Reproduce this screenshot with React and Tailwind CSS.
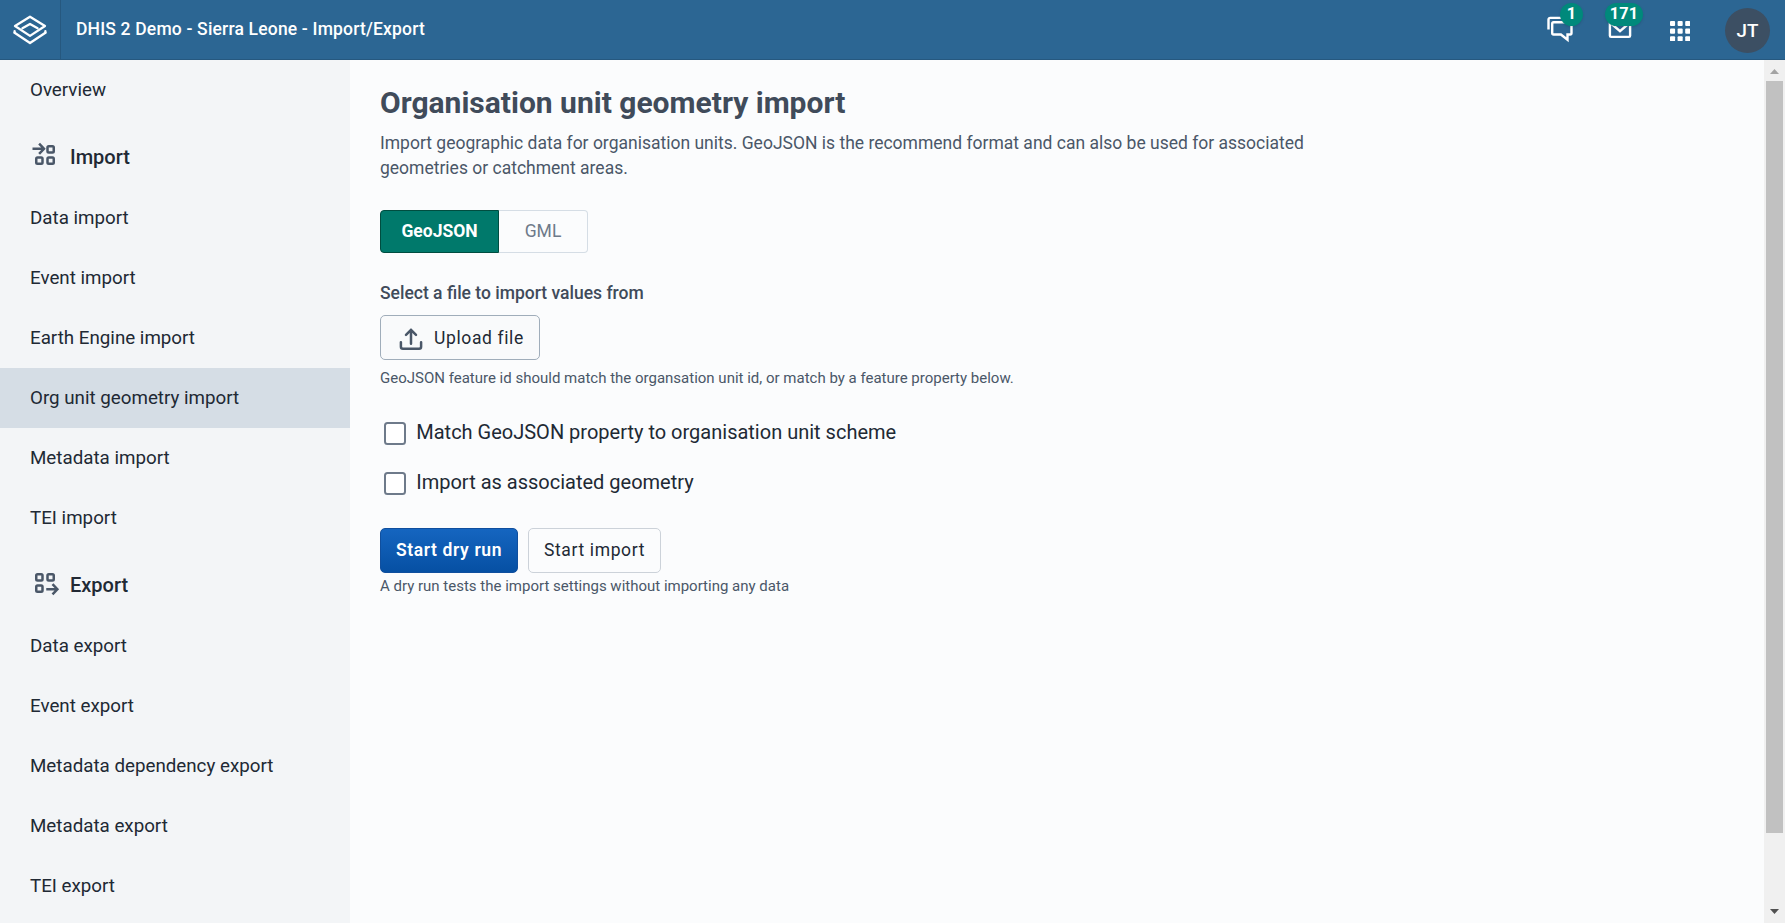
import React from "react";

const importItems = [
  "Data import",
  "Event import",
  "Earth Engine import",
  "Org unit geometry import",
  "Metadata import",
  "TEI import",
];
const exportItems = [
  "Data export",
  "Event export",
  "Metadata dependency export",
  "Metadata export",
  "TEI export",
];

function Logo() {
  return (
    <svg className="h-[30px] w-[34px]" viewBox="0 0 34 30" fill="none" stroke="#fff" strokeWidth="2.3" strokeLinejoin="round" strokeLinecap="round">
      <path d="M17 1.7 32 11 17 20.9 2 11Z" />
      <path d="M9.4 13.2 17 8.9 24.6 13.2" />
      <path d="M1.6 17.7 17 28 32.4 17.7" />
      <path d="M1.6 17.7V16.2M32.4 17.7V16.2" />
    </svg>
  );
}

function ImportIcon() {
  return (
    <svg className="size-[30px]" viewBox="0 0 24 24" fill="none" stroke="#4a5768" strokeWidth="2">
      <rect x="14" y="5" width="5" height="5" rx="1" />
      <rect x="5" y="14" width="5" height="5" rx="1" />
      <rect x="14" y="14" width="5" height="5" rx="1" />
      <path d="M2 7h9M7.3 2.9 11.2 7 7.3 11.1" />
    </svg>
  );
}

function ExportIcon() {
  return (
    <svg className="size-[30px]" viewBox="0 0 24 24" fill="none" stroke="#4a5768" strokeWidth="2">
      <rect x="5" y="5" width="5" height="5" rx="1" />
      <rect x="14" y="5" width="5" height="5" rx="1" />
      <rect x="5" y="14" width="5" height="5" rx="1" />
      <path d="M13 17h9M18 12.9 21.9 17 18 21.1" />
    </svg>
  );
}

function MessagesIcon() {
  return (
    <svg className="size-[30px]" viewBox="0 0 30 30" fill="none" stroke="#fff" strokeWidth="2.4">
      <path d="M3.5 14.6V4.6a1.7 1.7 0 0 1 1.7-1.7H22" />
      <path d="M8.6 7.3h16.5a1.4 1.4 0 0 1 1.4 1.4v9.4a1.4 1.4 0 0 1-1.4 1.4h-2.6v5.2l-6.6-5.2H8.6a1.4 1.4 0 0 1-1.4-1.4V8.7a1.4 1.4 0 0 1 1.4-1.4Z" />
    </svg>
  );
}

function MailIcon() {
  return (
    <svg className="size-[30px]" viewBox="0 0 30 30" fill="none" stroke="#fff" strokeWidth="2.4">
      <rect x="4.9" y="4.5" width="20.2" height="17.4" rx="1.2" />
      <path d="M5 7.5 15 16.2 25 7.5" />
    </svg>
  );
}

function AppsIcon() {
  const pos = [0, 7.6, 15.2];
  return (
    <svg className="h-[20.4px] w-[20.4px]" viewBox="0 0 20.4 20.4" fill="#fff">
      {pos.map((y) => pos.map((x) => <rect key={x + "-" + y} x={x} y={y} width="5.1" height="5.1" rx="1" />))}
    </svg>
  );
}

function UploadIcon() {
  return (
    <svg className="size-[30px]" viewBox="0 0 30 30" fill="none" stroke="#4a5768" strokeWidth="2.5" strokeLinecap="round">
      <path d="M15 20.8V6.8M10 11.8 15 6.8 20 11.8" strokeLinejoin="round" />
      <path d="M4.9 19.2v4.6a2 2 0 0 0 2 2h16.2a2 2 0 0 0 2-2v-4.6" />
    </svg>
  );
}

function Item({ label, active }) {
  return (
    <li className={"flex h-[60px] items-center pl-[30px] pb-px " + (active ? "bg-[#d5dde5]" : "")}>{label}</li>
  );
}

function Section({ icon, title, items }) {
  return (
    <section>
      <h2 className="flex h-[68px] items-start pl-[30px] text-[20px] font-medium leading-[30px]">
        <span className="pt-5">{icon}</span>
        <span className="pl-[10px] pt-[22px]">{title}</span>
      </h2>
      <ul>
        {items.map((i) => (
          <Item key={i} label={i} active={i === "Org unit geometry import"} />
        ))}
      </ul>
    </section>
  );
}

function Check({ label }) {
  return (
    <label className="flex h-[25px] items-center pl-[3.75px] text-[20px] text-[#212934]">
      <span className="mt-[2px] size-[22.5px] rounded-[3.5px] border-[2.5px] border-[#6e7a8a] bg-white" />
      <span className="pb-[2px] pl-[10px]">{label}</span>
    </label>
  );
}

export default function App() {
  return (
    <div className="flex h-[923px] w-[1785px] flex-col overflow-hidden bg-[#fbfcfd] font-['Roboto',sans-serif] text-[#212934]">
      <header className="flex h-[60px] shrink-0 items-center border-b border-[#26587f] bg-[#2c6693] text-white">
        <div className="flex h-full w-[61px] items-center justify-center border-r border-[#26587f]">
          <Logo />
        </div>
        <h1 className="grow pb-[2px] pl-[15px] text-[17.5px] font-medium leading-5 tracking-[0.175px]">DHIS 2 Demo - Sierra Leone - Import/Export</h1>
        <div className="relative mr-[30px] size-[30px]">
          <MessagesIcon />
          <span className="absolute -top-3 left-[15px] flex h-[23.5px] w-[23px] items-center justify-center rounded-full bg-[#00897b] text-[16.25px] font-bold shadow">1</span>
        </div>
        <div className="relative mr-[35px] size-[30px]">
          <MailIcon />
          <span className="absolute -top-3 left-0 flex h-[23.5px] w-[38px] items-center justify-center rounded-full bg-[#00897b] text-[16.25px] font-bold tracking-[0.2px] shadow">171</span>
        </div>
        <div className="mr-[34.6px] pt-[3px]">
          <AppsIcon />
        </div>
        <div className="mr-[15px] mt-[2px] flex size-[45px] items-center justify-center rounded-full bg-[#3c4f63] pt-px text-[18.75px] font-medium">JT</div>
      </header>

      <div className="flex min-h-0 grow">
        <nav className="w-[350px] shrink-0 bg-[#f3f5f7] text-[18.75px] leading-[22px]">
          <ul>
            <Item label="Overview" />
          </ul>
          <Section icon={<ImportIcon />} title="Import" items={importItems} />
          <Section icon={<ExportIcon />} title="Export" items={exportItems} />
        </nav>

        <main className="flex grow flex-col items-start pl-[30px]">
          <h2 className="mt-[25px] text-[30px] font-bold leading-[35px] text-[#404b5a]">Organisation unit geometry import</h2>
          <p className="mt-[11px] w-[937px] text-[17.5px] leading-[25px] text-[#4a5768]">
            Import geographic data for organisation units. GeoJSON is the recommend format and can also be used for associated geometries or catchment areas.
          </p>
          <div className="mt-[29px] flex h-[43px] text-[17.5px]">
            <button className="flex w-[119px] items-center justify-center rounded-l-[4px] border border-[#004d40] bg-[#00796b] font-bold text-white">GeoJSON</button>
            <button className="flex w-[89px] items-center justify-center rounded-r-[4px] border border-l-0 border-[#d5dde5] text-[#6e7a8a]">GML</button>
          </div>
          <div className="mt-[30px] text-[17.5px] font-medium leading-5 text-[#404b5a]">Select a file to import values from</div>
          <button className="mt-3 flex h-[45px] w-[160px] items-center rounded-[5px] border border-[#a0adba] bg-[#f9fafb] pl-[15px] text-[17.5px] tracking-[0.625px]">
            <UploadIcon />
            <span className="pl-2 pt-px">Upload file</span>
          </button>
          <p className="mt-[9px] text-[15px] leading-[18px] text-[#4a5768]">
            GeoJSON feature id should match the organsation unit id, or match by a feature property below.
          </p>
          <div className="mt-[33px] flex flex-col gap-[25px]">
            <Check label="Match GeoJSON property to organisation unit scheme" />
            <Check label="Import as associated geometry" />
          </div>
          <div className="mt-[33px] flex h-[45px] gap-[10px] text-[17.5px] tracking-[0.625px]">
            <button className="w-[138px] rounded-[5px] border border-[#104f9e] bg-linear-to-b from-[#1565c0] to-[#0650a3] font-semibold text-white">Start dry run</button>
            <button className="w-[133px] rounded-[5px] border border-[#ccd2d9] bg-[#fbfcfd]">Start import</button>
          </div>
          <p className="mt-1 text-[15px] leading-[18px] text-[#4a5768]">A dry run tests the import settings without importing any data</p>
        </main>

        <div className="flex w-[21px] shrink-0 flex-col items-center bg-[#f0f0f0]">
          <svg className="h-[21px] w-[21px] shrink-0" viewBox="0 0 21 21">
            <path d="M6 14h9l-4.5-5Z" fill="#a3a3a3" />
          </svg>
          <div className="h-[752px] w-[17px] shrink-0 bg-[#c1c1c1]" />
          <div className="grow" />
          <svg className="h-[21px] w-[21px] shrink-0" viewBox="0 0 21 21">
            <path d="M6 7h9l-4.5 5Z" fill="#505050" />
          </svg>
        </div>
      </div>
    </div>
  );
}
